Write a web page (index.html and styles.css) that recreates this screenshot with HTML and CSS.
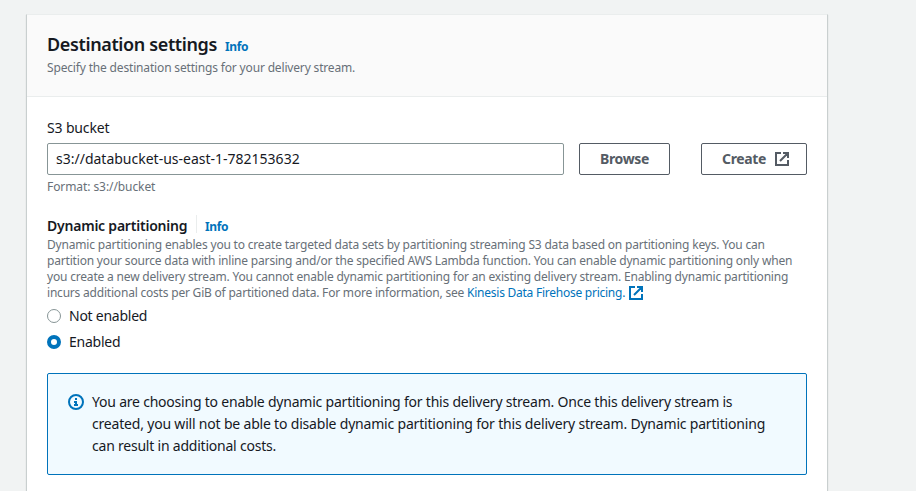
FILE: index.html
```html
<!DOCTYPE html>
<html lang="en">
<head>
<meta charset="utf-8">
<title>Destination settings</title>
<link rel="stylesheet" href="styles.css">
</head>
<body>
<main class="panel">
  <header class="panel-header">
    <div class="title-row"><h2 class="title">Destination settings</h2><a class="info">Info</a></div>
    <p class="subtitle">Specify the destination settings for your delivery stream.</p>
  </header>
  <div class="panel-body">
    <label class="label"><span>S3 bucket</span></label>
    <div class="bucket-row">
      <div class="input"><span>s3://databucket-us-east-1-782153632</span></div>
      <button class="btn browse"><span>Browse</span></button>
      <button class="btn create"><span>Create</span>
        <svg class="ext" viewBox="0 0 14 14"><path d="M6 1H1v12h12V8M8 1h5v5M13 1L5 9"/></svg>
      </button>
    </div>
    <p class="hint"><span>Format: s3://bucket</span></p>
    <div class="section-row"><h3 class="section-title">Dynamic partitioning</h3><a class="info divided">Info</a></div>
    <p class="description">
      <span class="line d1">Dynamic partitioning enables you to create targeted data sets by partitioning streaming S3 data based on partitioning keys. You can</span>
      <span class="line d2">partition your source data with inline parsing and/or the specified AWS Lambda function. You can enable dynamic partitioning only when</span>
      <span class="line d3">you create a new delivery stream. You cannot enable dynamic partitioning for an existing delivery stream. Enabling dynamic partitioning</span>
      <span class="line d4">incurs additional costs per GiB of partitioned data. For more information, see <a class="link">Kinesis Data Firehose pricing.</a><svg class="ext link-ext" viewBox="0 0 14 14"><path d="M6 1H1v12h12V8M8 1h5v5M13 1L5 9"/></svg></span>
    </p>
    <div class="radio"><i class="dot"></i><span class="r1">Not enabled</span></div>
    <div class="radio"><i class="dot checked"></i><span class="r2">Enabled</span></div>
    <div class="alert">
      <svg class="alert-icon" viewBox="0 0 16 16"><circle cx="8" cy="8" r="7"/><path d="M8 4v2M6 8h2V11M6 11h4"/></svg>
      <p class="alert-text">
        <span class="line a1">You are choosing to enable dynamic partitioning for this delivery stream. Once this delivery stream is</span>
        <span class="line a2">created, you will not be able to disable dynamic partitioning for this delivery stream. Dynamic partitioning</span>
        <span class="line a3">can result in additional costs.</span>
      </p>
    </div>
  </div>
</main>
</body>
</html>
```
FILE: styles.css
```css
* { box-sizing: border-box; }
html, body { height: 100%; }
body { margin: 0; padding: 14px 0 0 26px; overflow: hidden; background: #f1f3f3; font: 14px/22px "Noto Sans", sans-serif; color: #16191f; }
h2, h3, p { margin: 0; }
.panel { width: 802px; height: 477px; background: #fff; border: 1px solid #c9cfcf; border-top-color: #eaeded; border-bottom: 0; box-shadow: 0 1px 1px rgba(0,28,36,.15); }
.panel-header { height: 82px; padding: 19px 20px 0; background: #fafafa; border-bottom: 1px solid #eaeded; }
.title-row { display: flex; height: 23px; white-space: nowrap; }
.title { width: 178px; font-size: 18px; line-height: 21px; font-weight: 600; letter-spacing: -.37px; }
.info { font-size: 12px; line-height: 26px; font-weight: 700; letter-spacing: -.35px; color: #0073bb; }
.subtitle { font-size: 12px; line-height: 22px; letter-spacing: -.165px; color: #687078; white-space: nowrap; }
.panel-body { padding: 20px 20px 0; }
.label { display: block; height: 26px; letter-spacing: -.15px; }
.bucket-row { display: flex; height: 32px; }
.input { width: 517px; padding: 0 8px; border: 1px solid #879596; border-radius: 2px; line-height: 30px; white-space: nowrap; }
.btn { display: flex; align-items: center; justify-content: center; padding: 0; background: #fff; border: 1px solid #545b64; border-radius: 2px; color: #545b64; font: 700 14px/30px "Noto Sans", sans-serif; letter-spacing: -.35px; }
.browse { width: 91px; margin-left: 15px; }
.create { width: 106px; margin-left: 31px; justify-content: flex-start; padding-left: 20px; }
.ext { width: 14px; height: 14px; fill: none; stroke: currentColor; stroke-width: 2; }
.create .ext { margin-left: 9px; }
.hint { margin-top: 4px; font-size: 12px; line-height: 16px; letter-spacing: -.08px; color: #687078; }
.section-row { display: flex; height: 22px; margin-top: 20px; white-space: nowrap; }
.section-title { width: 149px; font-size: 14px; line-height: 22px; font-weight: 600; letter-spacing: -.22px; }
.divided { height: 18px; padding-left: 8px; border-left: 1px solid #eaeded; line-height: 23px; }
.description { font-size: 12px; line-height: 16px; color: #687078; }
.line { display: block; white-space: nowrap; }
.link { color: #0073bb; letter-spacing: -.25px; }
.link-ext { margin-left: 4px; color: #0073bb; vertical-align: -3px; }
.d1 { letter-spacing: -.187px; }
.d2, .d3 { letter-spacing: -.185px; }
.d4 { height: 16px; letter-spacing: -.205px; }
.radio { display: flex; align-items: center; height: 22px; margin-top: 4px; letter-spacing: -.25px; }
.dot { width: 14px; height: 14px; margin-right: 8px; border: 1px solid #879596; border-radius: 50%; background: #fff; }
.checked { border: 4px solid #0073bb; }
.alert { display: flex; height: 102px; margin-top: 20px; padding: 17px 20px; border: 1px solid #0073bb; border-radius: 2px; background: #f1faff; }
.alert-icon { flex: none; width: 16px; height: 16px; margin: 3px 8px 0 0; fill: none; stroke: #0073bb; stroke-width: 2; }
.a1 { letter-spacing: -.215px; }
.a2 { letter-spacing: -.192px; }
.a3 { letter-spacing: -.22px; }
```
